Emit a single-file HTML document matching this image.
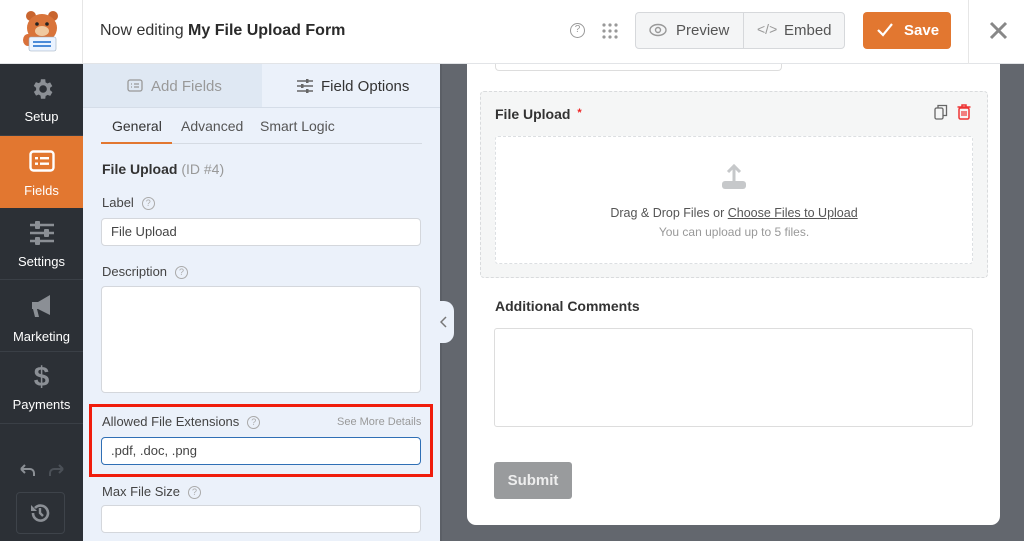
<!DOCTYPE html>
<html><head><meta charset="utf-8"><style>
*{box-sizing:border-box;margin:0;padding:0}
body{width:1024px;height:541px;overflow:hidden;font-family:"Liberation Sans",sans-serif;background:#63676e;position:relative;color:#444}
.a{position:absolute}
.hdr{left:0;top:0;width:1024px;height:64px;background:#fff;border-bottom:1px solid #e2e4e7;z-index:5}
.side{left:0;top:64px;width:83px;height:477px;background:#2c3036}
.si{position:absolute;left:0;width:83px;height:72px;border-bottom:1px solid #3a3f46;text-align:center;color:#fff;font-size:13px}
.si svg{display:block;margin:12px auto 7px}
.panel{left:83px;top:64px;width:357px;height:477px;background:#ebf1fa}
.lbl{font-size:13px;color:#444}
.q{display:inline-block;width:13px;height:13px;border:1px solid #aaa;border-radius:50%;font-size:9px;line-height:11px;text-align:center;color:#aaa;vertical-align:1px;margin-left:8px}
.inp{background:#fff;border:1px solid #d4d7dc;border-radius:4px;font-size:13px;color:#444;padding:0 9px}
.card{left:467px;top:64px;width:533px;height:461px;background:#fff;border-radius:0 0 9px 9px}
.z{z-index:6}
</style></head><body>
<div class="a hdr"></div>
<div class="a z" style="left:82px;top:0;width:1px;height:64px;background:#e6e6e6"></div>
<svg class="a z" style="left:13px;top:8px" width="52" height="46" viewBox="0 0 52 46">
<ellipse cx="15" cy="32" rx="5" ry="6" fill="#d9713a"/>
<circle cx="18" cy="8" r="5" fill="#c9652f"/><circle cx="40" cy="8" r="5" fill="#c9652f"/>
<ellipse cx="29" cy="20" rx="15" ry="14" fill="#d9743a"/>
<ellipse cx="29" cy="23" rx="7" ry="5" fill="#f0c9a0"/>
<circle cx="24" cy="16" r="1.8" fill="#222"/><circle cx="34" cy="16" r="1.8" fill="#222"/>
<rect x="16" y="29" width="27" height="14" rx="2" fill="#eaf3ff" stroke="#9ab" stroke-width=".6"/>
<rect x="20" y="33" width="18" height="2" fill="#4a8ad8"/><rect x="20" y="37" width="18" height="2" fill="#4a8ad8"/>
</svg>
<div class="a z" style="left:100px;top:22px;font-size:16px;color:#333">Now editing <b style="color:#2a2a2a">My File Upload Form</b></div>
<div class="a z" style="left:570px;top:23px;width:15px;height:15px;border:1.5px solid #999;border-radius:50%;font-size:10px;text-align:center;line-height:12px;color:#999">?</div>
<svg class="a z" style="left:602px;top:23px" width="16" height="16"><g fill="#999"><circle cx="2" cy="2" r="1.6"/><circle cx="8" cy="2" r="1.6"/><circle cx="14" cy="2" r="1.6"/><circle cx="2" cy="8" r="1.6"/><circle cx="8" cy="8" r="1.6"/><circle cx="14" cy="8" r="1.6"/><circle cx="2" cy="14" r="1.6"/><circle cx="8" cy="14" r="1.6"/><circle cx="14" cy="14" r="1.6"/></g></svg>
<div class="a z" style="left:635px;top:12px;width:210px;height:37px;border:1px solid #d6d8db;border-radius:4px;background:#f4f5f6"></div>
<div class="a z" style="left:743px;top:13px;width:1px;height:35px;background:#d6d8db"></div>
<svg class="a z" style="left:649px;top:23px" width="18" height="14"><ellipse cx="9" cy="7" rx="8" ry="5.5" fill="none" stroke="#999" stroke-width="1.4"/><circle cx="9" cy="7" r="2.5" fill="none" stroke="#999" stroke-width="1.4"/></svg>
<div class="a z" style="left:676px;top:22px;font-size:15px;color:#555">Preview</div>
<div class="a z" style="left:757px;top:21px;font-size:14px;color:#999">&lt;/&gt;</div>
<div class="a z" style="left:784px;top:22px;font-size:15px;color:#555">Embed</div>
<div class="a z" style="left:863px;top:12px;width:88px;height:37px;background:#e27730;border-radius:4px"></div>
<svg class="a z" style="left:877px;top:23px" width="16" height="14"><path d="M1 7l5 5L15 1" fill="none" stroke="#fff" stroke-width="2.2"/></svg>
<div class="a z" style="left:904px;top:22px;font-size:15px;color:#fff;font-weight:bold">Save</div>
<div class="a z" style="left:968px;top:0;width:1px;height:64px;background:#e6e6e6"></div>
<svg class="a z" style="left:989px;top:21px" width="19" height="19"><path d="M2 2l15 15M17 2L2 17" stroke="#888" stroke-width="3"/></svg>

<div class="a side"></div>
<div class="si" style="top:64px"><svg width="26" height="26" viewBox="0 0 24 24"><path fill="#8b8f95" d="M19.4 13a7.5 7.5 0 000-2l2.1-1.6-2-3.5-2.5 1a7 7 0 00-1.7-1L15 3h-4l-.4 2.6a7 7 0 00-1.7 1l-2.5-1-2 3.5L6.6 11a7.5 7.5 0 000 2l-2.1 1.6 2 3.5 2.5-1a7 7 0 001.7 1L11 21h4l.4-2.6a7 7 0 001.7-1l2.5 1 2-3.5zM13 15.5a3.5 3.5 0 110-7 3.5 3.5 0 010 7z"/></svg>Setup</div>
<div class="si" style="top:136px;background:#e27730;border:0"><svg width="26" height="22" viewBox="0 0 26 22" style="margin:14px auto 11px"><rect x="1.5" y="1.5" width="23" height="19" rx="3" fill="none" stroke="#fff" stroke-width="2.4"/><rect x="6" y="7" width="3" height="2.4" fill="#fff"/><rect x="11" y="7" width="9" height="2.4" fill="#fff"/><rect x="6" y="12.5" width="3" height="2.4" fill="#fff"/><rect x="11" y="12.5" width="9" height="2.4" fill="#fff"/></svg>Fields</div>
<div class="si" style="top:208px"><svg width="26" height="24" viewBox="0 0 26 24" style="margin:13px auto 9px"><g stroke="#8b8f95" stroke-width="2.4"><path d="M1 4h24M1 12h24M1 20h24"/></g><g fill="#8b8f95"><rect x="6" y="0" width="5" height="8" rx="1"/><rect x="15" y="8" width="5" height="8" rx="1"/><rect x="6" y="16" width="5" height="8" rx="1"/></g></svg>Settings</div>
<div class="si" style="top:280px"><svg width="26" height="26" viewBox="0 0 26 26" style="margin:13px auto 10px"><path fill="#8b8f95" d="M3 9h6l12-7v20l-12-6H8l2 8H6l-2-8H3z"/></svg>Marketing</div>
<div class="si" style="top:352px"><div style="font-size:28px;font-weight:bold;color:#8b8f95;margin:10px 0 5px;line-height:30px">$</div>Payments</div>
<svg class="a" style="left:18px;top:463px" width="50" height="14"><path d="M3 6h9a4 4 0 014 4v3M3 6l4-4M3 6l4 4" fill="none" stroke="#8b8f95" stroke-width="2"/><path d="M45 6h-9a4 4 0 00-4 4v3M45 6l-4-4M45 6l-4 4" fill="none" stroke="#4b5057" stroke-width="2"/></svg>
<div class="a" style="left:16px;top:492px;width:49px;height:42px;border:1px solid #3e434a;border-radius:4px"></div>
<svg class="a" style="left:29px;top:502px" width="22" height="22" viewBox="0 0 22 22"><path d="M4 11a7.5 7.5 0 102-5" fill="none" stroke="#8b8f95" stroke-width="2.6"/><path d="M2 3v6h6z" fill="#8b8f95"/><path d="M11 6v5l3 3" fill="none" stroke="#8b8f95" stroke-width="2.4"/></svg>

<div class="a panel"></div>
<div class="a" style="left:83px;top:64px;width:179px;height:43px;background:#dfe8f3"></div>
<div class="a" style="left:83px;top:107px;width:357px;height:1px;background:#d5dde8"></div>
<svg class="a" style="left:127px;top:79px" width="16" height="13"><rect x="1" y="1" width="14" height="11" rx="2" fill="none" stroke="#999" stroke-width="1.3"/><path d="M4 5h1M7 5h5M4 8h1M7 8h5" stroke="#999" stroke-width="1.3"/></svg>
<div class="a" style="left:151px;top:78px;font-size:15px;color:#999">Add Fields</div>
<svg class="a" style="left:297px;top:79px" width="16" height="14"><g stroke="#666" stroke-width="1.4"><path d="M0 2h16M0 7h16M0 12h16"/></g><g fill="#666"><rect x="9" y="0" width="2.5" height="4"/><rect x="4" y="5" width="2.5" height="4"/><rect x="9" y="10" width="2.5" height="4"/></g></svg>
<div class="a" style="left:321px;top:78px;font-size:15px;color:#333">Field Options</div>
<div class="a" style="left:112px;top:118px;font-size:14px;color:#333">General</div>
<div class="a" style="left:181px;top:118px;font-size:14px;color:#555">Advanced</div>
<div class="a" style="left:260px;top:118px;font-size:14px;color:#555">Smart Logic</div>
<div class="a" style="left:101px;top:143px;width:321px;height:1px;background:#d5dbe3"></div>
<div class="a" style="left:101px;top:142px;width:71px;height:2px;background:#e27730"></div>
<div class="a" style="left:102px;top:161px;font-size:14px;color:#333"><b>File Upload</b> <span style="color:#999">(ID #4)</span></div>
<div class="a lbl" style="left:102px;top:195px">Label<span class="q">?</span></div>
<div class="a inp" style="left:101px;top:218px;width:320px;height:28px;line-height:26px">File Upload</div>
<div class="a lbl" style="left:102px;top:264px">Description<span class="q">?</span></div>
<div class="a inp" style="left:101px;top:286px;width:320px;height:107px"></div>
<div class="a" style="left:89px;top:404px;width:344px;height:73px;border:3px solid #f01c0c"></div>
<div class="a lbl" style="left:102px;top:414px">Allowed File Extensions<span class="q">?</span></div>
<div class="a" style="left:337px;top:416px;font-size:11px;color:#999">See More Details</div>
<div class="a inp" style="left:101px;top:437px;width:320px;height:28px;line-height:26px;border:1.5px solid #2f6fb5">.pdf, .doc, .png</div>
<div class="a lbl" style="left:102px;top:484px">Max File Size<span class="q">?</span></div>
<div class="a inp" style="left:101px;top:505px;width:320px;height:28px"></div>
<div class="a" style="left:440px;top:64px;width:2px;height:477px;background:#5b5f66"></div>
<div class="a" style="left:439px;top:301px;width:15px;height:42px;background:#ebf1fa;border-radius:0 10px 10px 0"></div>
<svg class="a" style="left:440px;top:316px" width="8" height="12"><path d="M6 1L1 6l5 5" fill="none" stroke="#777" stroke-width="1.5"/></svg>

<div class="a card"></div>
<div class="a" style="left:495px;top:60px;width:287px;height:11px;border:1px solid #ddd;border-top:0;border-radius:0 0 4px 4px"></div>
<div class="a" style="left:480px;top:91px;width:508px;height:187px;background:#f5f6f6;border:1px dashed #d9dbdd;border-radius:4px"></div>
<div class="a" style="left:495px;top:106px;font-size:14px;font-weight:bold;color:#333">File Upload <span style="color:#e22;font-size:11px;vertical-align:3px;margin-left:3px">*</span></div>
<svg class="a" style="left:934px;top:104px" width="14" height="16"><rect x="1" y="4" width="8" height="11" rx="1.5" fill="none" stroke="#666" stroke-width="1.3"/><path d="M4 4V1.5h8.5v10H9" fill="none" stroke="#666" stroke-width="1.3"/></svg>
<svg class="a" style="left:957px;top:104px" width="14" height="16"><path d="M0.5 3h13M5 3V1h4v2" fill="none" stroke="#e33" stroke-width="1.5"/><rect x="2" y="4" width="10" height="11" rx="1.5" fill="none" stroke="#e33" stroke-width="1.5"/><path d="M5 7v5M7 7v5M9 7v5" stroke="#e33" stroke-width="1.2"/></svg>
<div class="a" style="left:495px;top:136px;width:478px;height:128px;background:#fff;border:1px dashed #dcdfe2;border-radius:3px"></div>
<svg class="a" style="left:722px;top:163px" width="24" height="27"><path d="M12 18V3M6 9l6-6 6 6" fill="none" stroke="#c6c8ca" stroke-width="3"/><rect x="0" y="18" width="24" height="8" rx="3" fill="#c6c8ca"/></svg>
<div class="a" style="left:495px;top:206px;width:478px;text-align:center;font-size:12.5px;color:#555">Drag &amp; Drop Files or <u>Choose Files to Upload</u></div>
<div class="a" style="left:495px;top:225px;width:478px;text-align:center;font-size:12px;color:#999">You can upload up to 5 files.</div>
<div class="a" style="left:495px;top:298px;font-size:14px;font-weight:bold;color:#333">Additional Comments</div>
<div class="a" style="left:494px;top:328px;width:479px;height:99px;border:1px solid #ddd;border-radius:3px"></div>
<div class="a" style="left:494px;top:462px;width:78px;height:37px;background:#999b9d;border-radius:3px;color:#eee;font-size:15px;font-weight:bold;text-align:center;line-height:37px">Submit</div>
</body></html>
